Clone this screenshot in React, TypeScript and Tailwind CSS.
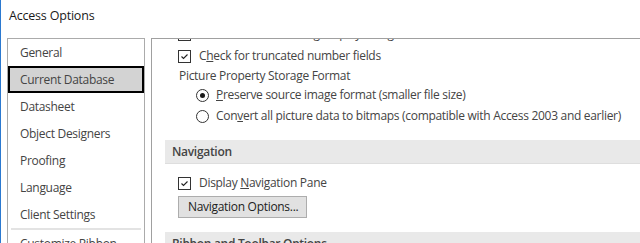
import React from "react";

const font = { fontFamily: '"Open Sans", "Noto Sans", sans-serif' };

function Check() {
  return (
    <span className="w-[13px] h-[13px] border border-[#333] bg-white flex items-center justify-center shrink-0">
      <svg width="9" height="9" viewBox="0 0 9 9">
        <path d="M1.5 4.5 L3.5 6.5 L7.5 2.5" fill="none" stroke="#222" strokeWidth="1.1" />
      </svg>
    </span>
  );
}

function Radio({ on }: { on?: boolean }) {
  return (
    <span className="w-[13px] h-[13px] rounded-full border border-[#333] bg-white flex items-center justify-center shrink-0">
      {on && <span className="w-[5px] h-[5px] rounded-full bg-[#1a1a1a]" />}
    </span>
  );
}

const navItems = ["General", "Current Database", "Datasheet", "Object Designers", "Proofing", "Language", "Client Settings"];

export default function App() {
  return (
    <div className="w-[640px] h-[243px] overflow-hidden bg-white border-l border-[#2b79d0] text-[12px] tracking-[-0.3px] text-[#444]" style={font}>
      <div className="h-[38px] pl-[8px] pt-[7px] text-[12.5px] text-[#1a1a1a] tracking-[-0.2px]">Access Options</div>
      <div className="flex h-[205px]">
        <div className="ml-[6px] w-[138px] border-l border-t border-r border-[#ababab] shrink-0">
          {navItems.map((n, i) =>
            i === 1 ? (
              <div key={n} className="h-[27px] border-2 border-black bg-[#d3d3d3] pl-[10px] flex items-center">{n}</div>
            ) : (
              <div key={n} className="h-[27px] pl-[12px] flex items-center">{n}</div>
            )
          )}
          <div className="mx-[3px] h-[2px] bg-[#e3e3e3]" />
          <div className="h-[27px] pl-[12px] flex items-center">Customize Ribbon</div>
        </div>
        <div className="ml-[6px] flex-1 border-l border-t border-[#a0a0a0] overflow-hidden">
          <div className="pl-[13px]">
            <div className="-mt-[16px] h-[22px] pl-[13px] flex items-center gap-[8px]">
              <Check />
              <span className="whitespace-nowrap">Show Search Bar using Display Navigation Pane</span>
            </div>
            <div className="h-[22px] pl-[13px] flex items-center gap-[8px]">
              <Check />
              <span>C<u>h</u>eck for truncated number fields</span>
            </div>
            <div className="h-[18px] pl-[14px] flex items-center">Picture Property Storage Format</div>
            <div className="h-[20px] pl-[31px] flex items-center gap-[7px]">
              <Radio on />
              <span><u>P</u>reserve source image format (smaller file size)</span>
            </div>
            <div className="h-[22px] pl-[31px] flex items-center gap-[7px]">
              <Radio />
              <span className="whitespace-nowrap">Con<u>v</u>ert all picture data to bitmaps (compatible with Access 2003 and earlier)</span>
            </div>
            <div className="mt-[13px] h-[24px] bg-[#e9e9e9] border-b border-[#dedede] pl-[7px] flex items-center font-semibold">Navigation</div>
            <div className="mt-[8px] h-[22px] pl-[13px] flex items-center gap-[8px]">
              <Check />
              <span>Display <u>N</u>avigation Pane</span>
            </div>
            <div className="mt-[2px] pl-[13px]">
              <button className="h-[22px] w-[129px] bg-[#e1e1e1] border border-[#adadad] text-left pl-[9px] text-[#222]">Navigation Options...</button>
            </div>
            <div className="mt-[14px] h-[24px] bg-[#e9e9e9] pl-[7px] flex items-center font-semibold">Ribbon and Toolbar Options</div>
          </div>
        </div>
      </div>
    </div>
  );
}
